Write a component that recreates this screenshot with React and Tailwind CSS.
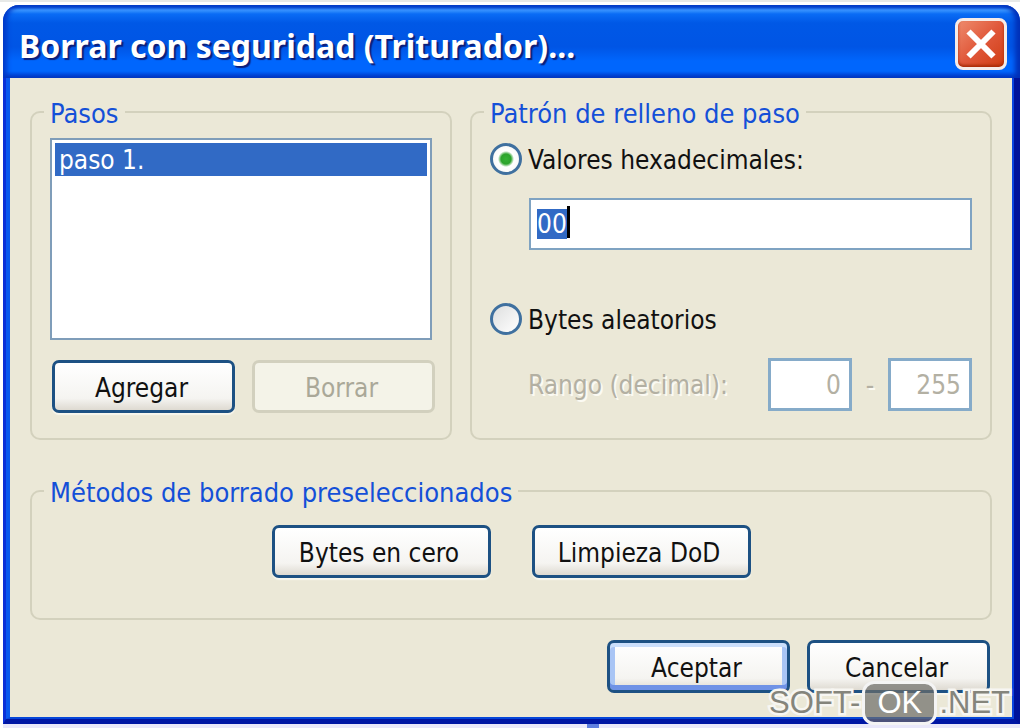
import { useEffect, useRef, useState } from "react";
import clsx from "clsx";

const Group = ({ title, className, children }) => {
  return (
    <fieldset className={clsx("min-w-0 rounded-[10px] border-2 border-[#d3d1bd]", className)}>
      <legend className="ml-3 px-1.5 pt-1 text-[27px] leading-7 text-[#1450d8]">{title}</legend>
      {children}
    </fieldset>
  );
};

const Button = ({ children, className, isDefault, disabled }) => {
  return (
    <button
      type="button"
      disabled={disabled}
      className={clsx(
        "h-[53px] rounded-[7px] border-[3px] pt-0.5 pr-1 text-[26px] leading-8",
        disabled
          ? "border-[#d2d0be] bg-[#f4f3e8] text-[#aaa898]"
          : "border-[#1d5183] bg-linear-to-b from-white via-[#f5f4f1] via-75% to-[#dedad1] text-[#111111]",
        isDefault
          ? "shadow-[inset_0_4px_0_#cbdffb,inset_0_-5px_0_#6f92e6,inset_5px_0_0_#a9c5f5,inset_-5px_0_0_#a9c5f5]"
          : !disabled && "shadow-[0_2px_1px_#f8f7ee]",
        className
      )}
    >
      {children}
    </button>
  );
};

const Radio = ({ id, label, checked, onChange }) => {
  return (
    <div className="flex h-8 items-center gap-1.5">
      <input
        id={id}
        type="radio"
        name="patron"
        checked={checked}
        onChange={onChange}
        className="size-8 shrink-0 appearance-none rounded-full border-[3px] border-[#3f709f] bg-linear-to-br from-[#dedfdf] to-white checked:bg-[radial-gradient(circle,#35b235_0,#2ba32b_5px,#ffffff_8px,#f4f4f1_100%)]"
      />
      <label htmlFor={id} className="pt-0.5 text-[26px] leading-8 whitespace-nowrap text-[#111111]">
        {label}
      </label>
    </div>
  );
};

const TitleBar = () => {
  return (
    <div className="flex h-[73px] items-center justify-between rounded-t-[16px] bg-[linear-gradient(to_bottom,#0a50d8_0,#0a50d8_2px,#3b97ff_5px,#0a6cf5_9px,#0058e6_18px,#0055e5_42px,#0066fd_56px,#0066fd_66px,#0047d6_71px,#0a44c8_73px)] pt-1 pr-[13px] pl-4 shadow-[inset_-5px_0_5px_#0030b8,inset_4px_0_5px_#0038c8]">
      <h1 className="pt-1 font-['Noto_Sans','Open_Sans',sans-serif] text-[32px] leading-10 font-bold whitespace-nowrap text-white [text-shadow:2px_2px_1px_#0b1f7a]">
        Borrar con seguridad (Triturador)...
      </h1>
      <button
        type="button"
        aria-label="Cerrar"
        className="flex size-[52px] items-center justify-center rounded-[8px] border-[3px] border-[#f6ece8] bg-linear-to-br from-[#ee8a6c] via-[#e0583a] to-[#d03c0c] shadow-[inset_0_-2px_3px_#a82c08]"
      >
        <svg width="30" height="30" viewBox="0 0 30 30" fill="none" stroke="#fff" strokeWidth="6">
          <path d="M2.5 2.5L27.5 27.5M27.5 2.5L2.5 27.5" />
        </svg>
      </button>
    </div>
  );
};

const Watermark = () => {
  return (
    <div
      aria-hidden="true"
      className="pointer-events-none absolute right-2.5 -bottom-px flex items-center gap-0.5 font-['Liberation_Sans',sans-serif] text-[31px] leading-8 text-[#85857c]"
    >
      <span className="[-webkit-text-stroke:5px_#f7f6f2] [paint-order:stroke_fill]">SOFT-</span>
      <span className="flex h-11 w-[75px] items-center justify-center rounded-[12px] border-[3px] border-[#f4f4f4] bg-[#6c6c68]/70 text-white">
        OK
      </span>
      <span className="[-webkit-text-stroke:5px_#f7f6f2] [paint-order:stroke_fill]">.NET</span>
    </div>
  );
};

const steps = ["paso 1."];

const App = () => {
  const [mode, setMode] = useState("hex");
  const [hex, setHex] = useState("00");
  const hexRef = useRef(null);

  // the pattern field opens with its value selected
  useEffect(() => {
    hexRef.current?.focus();
    hexRef.current?.select();
  }, []);

  return (
    <div className="overflow-hidden border-t-2 border-[#e7e9e8] bg-white pt-[3px] pl-[3px] font-['DejaVu_Sans_Condensed','DejaVu_Sans',sans-serif] [font-stretch:condensed]">
      <main className="relative">
        <TitleBar />

        <div className="border-r-[6px] border-b-[5px] border-l-[3px] border-r-[#00129a] border-b-[#0016a4] border-l-[#0a30d8]">
          <div className="border-r-2 border-b-2 border-l-4 border-r-[#0a44e0] border-b-[#0646d8] border-l-[#0958ee] bg-[#ebe8d7] px-5 pt-[18px] pb-6">
            <div className="grid grid-cols-[422fr_522fr] gap-[18px]">
              <Group title="Pasos" className="pb-[25px]">
                <div className="px-[18px] pt-2.5">
                  <ul
                    role="listbox"
                    aria-label="Pasos"
                    className="h-[202px] border-2 border-[#7f9db9] bg-white p-[3px]"
                  >
                    {steps.map((step) => (
                      <li
                        key={step}
                        role="option"
                        aria-selected="true"
                        className="bg-[#316ac5] px-1 pt-px text-[26px] leading-8 text-white"
                      >
                        {step}
                      </li>
                    ))}
                  </ul>
                  <div className="mt-5 ml-0.5 flex gap-[17px]">
                    <Button className="w-[183px] shrink-0">Agregar</Button>
                    <Button className="w-[183px] shrink-0" disabled>
                      Borrar
                    </Button>
                  </div>
                </div>
              </Group>

              <Group title="Patrón de relleno de paso">
                <div className="px-[18px] pt-[15px]">
                  <Radio
                    id="hex"
                    label="Valores hexadecimales:"
                    checked={mode === "hex"}
                    onChange={() => setMode("hex")}
                  />
                  <div className="relative mt-[23px] ml-[39px]">
                    <input
                      ref={hexRef}
                      type="text"
                      aria-label="Valores hexadecimales"
                      value={hex}
                      onChange={(e) => setHex(e.target.value)}
                      className="block h-[52px] w-full border-2 border-[#7fa3c2] bg-white px-1.5 text-[26px] leading-8 text-[#111111] outline-none selection:bg-[#316ac5] selection:text-white"
                    />
                    <span className="absolute top-2 left-[38px] h-8 w-[3px] bg-black"></span>
                  </div>

                  <div className="mt-[53px]">
                    <Radio
                      id="random"
                      label="Bytes aleatorios"
                      checked={mode === "random"}
                      onChange={() => setMode("random")}
                    />
                  </div>
                  <div className="mt-[23px] ml-[38px] flex items-center justify-between text-[26px] leading-8 text-[#b3b0a3]">
                    <label htmlFor="from" className="whitespace-nowrap [text-shadow:2px_2px_0_#fbfaf3]">
                      Rango (decimal):
                    </label>
                    <div className="flex items-center">
                      <input
                        id="from"
                        type="text"
                        disabled
                        defaultValue="0"
                        className="h-[53px] w-[84px] border-[3px] border-[#86abc9] bg-white px-2 text-right"
                      />
                      <span className="w-9 text-center [text-shadow:2px_2px_0_#fbfaf3]">-</span>
                      <input
                        type="text"
                        aria-label="Hasta"
                        disabled
                        defaultValue="255"
                        className="h-[53px] w-[84px] border-[3px] border-[#86abc9] bg-white px-2 text-right"
                      />
                    </div>
                  </div>
                </div>
              </Group>
            </div>

            <Group title="Métodos de borrado preseleccionados" className="mt-[35px] pb-10">
              <div className="flex justify-center gap-[41px] pt-[18px]">
                <Button className="w-[219px]">Bytes en cero</Button>
                <Button className="w-[219px]">Limpieza DoD</Button>
              </div>
            </Group>

            <div className="mt-5 flex justify-end gap-[17px] pr-0.5">
              <Button className="w-[183px]" isDefault>
                Aceptar
              </Button>
              <Button className="w-[183px]">Cancelar</Button>
            </div>
          </div>
        </div>

        <Watermark />
      </main>

      {/* edge of the window behind */}
      <div className="flex h-1 justify-center bg-[#e9e8fa] pr-3.5">
        <div className="ml-44 w-3 bg-[#5f7fe0]"></div>
      </div>
    </div>
  );
};

export default App;
